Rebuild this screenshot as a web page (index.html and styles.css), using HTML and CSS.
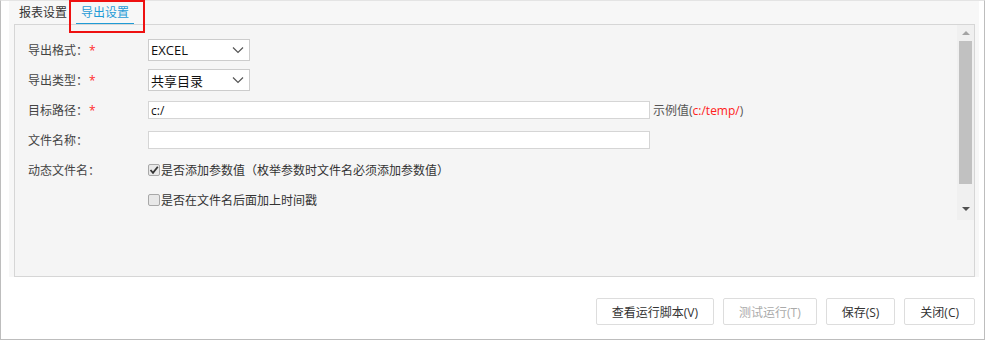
FILE: index.html
```html
<!DOCTYPE html>
<html lang="zh-CN">
<head>
    <meta charset="UTF-8">
    <title>导出设置</title>
    <link rel="stylesheet" href="styles.css">
</head>
<body>
    <div class="dialog">
        <div class="tab-page">
            <div class="tabs">
                <span class="tab">报表设置</span>
                <span class="tab active">导出设置</span>
            </div>
            <div class="panel">
                <div class="scroll-area">
                    <div class="form">
                        <div class="form-row">
                            <label class="form-label">导出格式：<span class="req">*</span></label>
                            <div class="select"><span>EXCEL</span>
                                <svg width="12" height="8" viewBox="0 0 12 8"><path d="M1 1.5 L6 6.5 L11 1.5" fill="none" stroke="#555" stroke-width="1.2"/></svg>
                            </div>
                        </div>
                        <div class="form-row">
                            <label class="form-label">导出类型：<span class="req">*</span></label>
                            <div class="select"><span>共享目录</span>
                                <svg width="12" height="8" viewBox="0 0 12 8"><path d="M1 1.5 L6 6.5 L11 1.5" fill="none" stroke="#555" stroke-width="1.2"/></svg>
                            </div>
                        </div>
                        <div class="form-row">
                            <label class="form-label">目标路径：<span class="req">*</span></label>
                            <input class="text-input" type="text" value="c:/">
                            <span class="hint">示例值(<span class="hint-red">c:/temp/</span>)</span>
                        </div>
                        <div class="form-row">
                            <label class="form-label">文件名称：</label>
                            <input class="text-input" type="text" value="">
                        </div>
                        <div class="form-row">
                            <label class="form-label">动态文件名：</label>
                            <span class="check checked">
                                <svg width="10" height="10" viewBox="0 0 10 10"><path d="M1.5 5 L4 7.8 L8.8 1.8" fill="none" stroke="#333" stroke-width="1.8"/></svg>
                            </span>
                            <span class="check-text">是否添加参数值（枚举参数时文件名必须添加参数值）</span>
                        </div>
                        <div class="form-row">
                            <label class="form-label"></label>
                            <span class="check"></span>
                            <span class="check-text">是否在文件名后面加上时间戳</span>
                        </div>
                    </div>
                    <div class="scrollbar">
                        <span class="arrow-up"></span>
                        <div class="thumb"></div>
                        <span class="arrow-down"></span>
                    </div>
                </div>
            </div>
        </div>
        <div class="buttons">
            <button class="btn">查看运行脚本(V)</button>
            <button class="btn" disabled>测试运行(T)</button>
            <button class="btn">保存(S)</button>
            <button class="btn">关闭(C)</button>
        </div>
        <div class="highlight"></div>
    </div>
</body>
</html>
```

FILE: styles.css
```css
body {
    margin: 0;
    padding: 0;
    font-family: "Open Sans", "Noto Sans CJK SC", sans-serif;
    font-size: 12px;
    color: #333333;
    background: #ffffff;
}
.dialog {
    position: relative;
    width: 985px;
    height: 340px;
    box-sizing: border-box;
    border: 1px solid #bdbdbd;
    border-top-color: #e4e4e4;
    background: #ffffff;
}
.tab-page {
    margin-left: 8px;
    width: 970px;
    height: 276px;
    box-sizing: border-box;
    padding: 23px 4px 0 5px;
    background: #f7f7f7;
    display: flex;
    flex-direction: column;
}
.tabs {
    position: absolute;
    top: 0;
    left: 9px;
    height: 23px;
    display: flex;
    align-items: flex-end;
}
.tab {
    height: 22px;
    line-height: 22px;
    padding: 0 5px;
    margin-left: 4px;
    color: #333333;
    box-sizing: border-box;
}
.tab.active {
    color: #1f9bd6;
    border-bottom: 1px solid #1f9bd6;
}
.panel {
    flex: 1;
    border: 1px solid #d6d6d6;
    background: #f5f5f5;
}
.scroll-area {
    display: flex;
    height: 195px;
}
.form {
    flex: 1;
    padding: 10px 0 0 13px;
}
.form-row {
    display: flex;
    align-items: center;
    height: 30px;
}
.form-label {
    width: 120px;
    color: #444444;
}
.req {
    color: #ff2a2a;
    margin-left: 1px;
}
.select {
    width: 102px;
    height: 22px;
    box-sizing: border-box;
    border: 1px solid #cccccc;
    background: #ffffff;
    display: flex;
    align-items: center;
    justify-content: space-between;
    padding: 0 5px 0 2px;
    color: #111111;
    font-size: 13px;
}
.text-input {
    width: 502px;
    height: 18px;
    box-sizing: border-box;
    border: 1px solid #d5d5d5;
    background: #ffffff;
    padding: 0 2px;
    margin: 0;
    font-family: inherit;
    font-size: 12px;
    color: #111111;
    outline: none;
}
.hint {
    margin-left: 3px;
    color: #555555;
}
.hint-red {
    color: #ff2020;
}
.check {
    width: 12px;
    height: 12px;
    box-sizing: border-box;
    border: 1px solid #a8a8a8;
    border-radius: 2px;
    background: #e8e8e8;
    display: flex;
    align-items: center;
    justify-content: center;
    margin-right: 1px;
}
.check-text {
    color: #333333;
}
.scrollbar {
    width: 17px;
    background: #f0f0f0;
    display: flex;
    flex-direction: column;
    align-items: center;
}
.arrow-up {
    margin-top: 6px;
    width: 0;
    height: 0;
    border-left: 4px solid transparent;
    border-right: 4px solid transparent;
    border-bottom: 4px solid #a3a3a3;
}
.thumb {
    margin-top: 6px;
    width: 13px;
    height: 143px;
    background: #c1c1c1;
}
.arrow-down {
    margin-top: 23px;
    width: 0;
    height: 0;
    border-left: 4px solid transparent;
    border-right: 4px solid transparent;
    border-top: 4px solid #505050;
}
.buttons {
    display: flex;
    justify-content: flex-end;
    gap: 9px;
    padding: 21px 9px 0 0;
}
.btn {
    height: 27px;
    padding: 0 15px;
    border: 1px solid #dddddd;
    border-radius: 2px;
    background: #ffffff;
    font-family: inherit;
    font-size: 12px;
    color: #333333;
}
.btn:disabled {
    color: #aaaaaa;
}
.highlight {
    position: absolute;
    left: 68px;
    top: -1px;
    width: 76px;
    height: 33px;
    box-sizing: border-box;
    border: 2px solid #ee1111;
}
```
